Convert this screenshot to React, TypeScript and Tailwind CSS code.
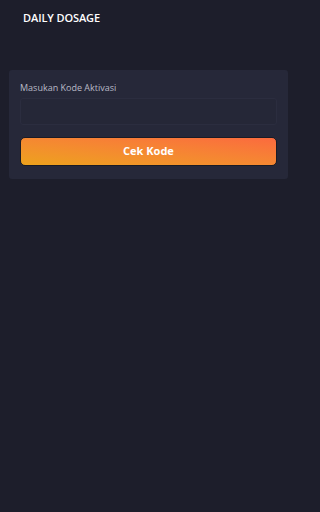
export default function App() {
	return (
		<div
			className="w-full min-h-screen bg-[#1d1e2b]"
			style={{ fontFamily: '"Open Sans", Inter, sans-serif' }}
		>
			<div className="w-[297px] flex flex-col">
				{/* Header */}
				<header className="h-[38px] pl-[23px] pt-[11px]">
					<h1 className="text-[11px] leading-[14px] font-semibold text-white tracking-[-0.1px]">
						DAILY DOSAGE
					</h1>
				</header>

				{/* Activation card */}
				<div className="mx-[9px] mt-[32px] bg-[#262839] rounded-[3px] px-[11px] pt-[12px] pb-[13px] flex flex-col">
					<label className="text-[9px] leading-[12px] text-[#b9bac6]">
						Masukan Kode Aktivasi
					</label>
					<input
						type="text"
						className="mt-[4px] h-[27px] w-full bg-[#252737] border border-[#2b2d3f] rounded-[3px] outline-none px-2 text-[10px] text-white"
					/>
					<button
						type="button"
						className="mt-[12px] h-[29px] w-full rounded-[5px] border border-[#1a1b25] bg-linear-to-tr from-[#eda21b] to-[#fb6a3e] text-white text-[11px] font-bold"
					>
						Cek Kode
					</button>
				</div>
			</div>
		</div>
	);
}
